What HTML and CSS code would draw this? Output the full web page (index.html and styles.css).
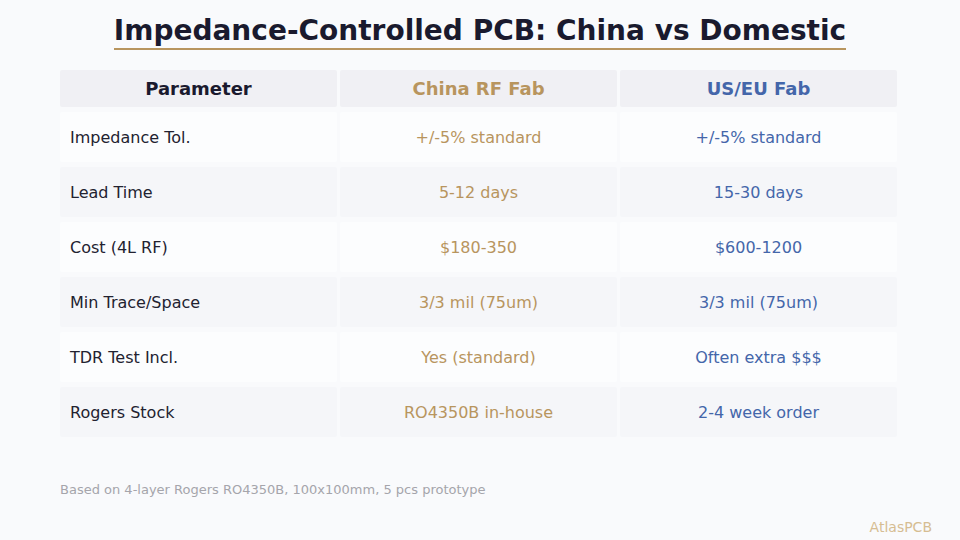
FILE: index.html
```html
<!DOCTYPE html>
<html>
<head>
<meta charset="utf-8">
<link rel="stylesheet" href="styles.css">
</head>
<body>
<div class="page">
  <header class="head">
    <h1 class="title">Impedance-Controlled PCB: China vs Domestic</h1>
  </header>
  <div class="table">
    <div class="cell th">Parameter</div>
    <div class="cell th gold">China RF Fab</div>
    <div class="cell th blue">US/EU Fab</div>

    <div class="cell odd label">Impedance Tol.</div>
    <div class="cell odd gold">+/-5% standard</div>
    <div class="cell odd blue">+/-5% standard</div>

    <div class="cell even label">Lead Time</div>
    <div class="cell even gold">5-12 days</div>
    <div class="cell even blue">15-30 days</div>

    <div class="cell odd label">Cost (4L RF)</div>
    <div class="cell odd gold">$180-350</div>
    <div class="cell odd blue">$600-1200</div>

    <div class="cell even label">Min Trace/Space</div>
    <div class="cell even gold">3/3 mil (75um)</div>
    <div class="cell even blue">3/3 mil (75um)</div>

    <div class="cell odd label">TDR Test Incl.</div>
    <div class="cell odd gold">Yes (standard)</div>
    <div class="cell odd blue">Often extra $$$</div>

    <div class="cell even label">Rogers Stock</div>
    <div class="cell even gold">RO4350B in-house</div>
    <div class="cell even blue">2-4 week order</div>
  </div>
  <p class="note">Based on 4-layer Rogers RO4350B, 100x100mm, 5 pcs prototype</p>
  <div class="brand">AtlasPCB</div>
</div>
</body>
</html>
```
FILE: styles.css
```css
* { box-sizing: border-box; }
html, body { margin: 0; padding: 0; }
body {
  background: #f9fafc;
  font-family: "DejaVu Sans", sans-serif;
  width: 960px;
  height: 540px;
  overflow: hidden;
}
.page {
  width: 960px;
  height: 540px;
  padding: 0 60px 0 60px;
  display: flex;
  flex-direction: column;
}
.head {
  display: flex;
  justify-content: center;
  padding-top: 14px;
}
.title {
  margin: 0;
  font-size: 28px;
  font-weight: bold;
  color: #1a1a2e;
  line-height: 34px;
  padding-bottom: 0;
  border-bottom: 2px solid #b8955e;
}
.table {
  margin-top: 20px;
  display: grid;
  grid-template-columns: 277px 277px 277px;
  grid-template-rows: 37px repeat(6, 50px);
  column-gap: 3px;
  row-gap: 5px;
}
.cell {
  display: flex;
  align-items: center;
  justify-content: center;
  font-size: 16px;
  border-radius: 2px;
}
.th {
  background: #f0f0f4;
  font-size: 18px;
  font-weight: bold;
  color: #1a1a2e;
}
.odd { background: #fcfdfe; }
.even { background: #f5f6f9; }
.label {
  justify-content: flex-start;
  padding-left: 10px;
  color: #222230;
}
.gold { color: #b8955e; }
.blue { color: #4466aa; }
.th.gold { color: #b8955e; }
.th.blue { color: #4466aa; }
.note {
  margin: 45px 0 0 0;
  font-size: 13px;
  color: #a5a5ab;
}
.brand {
  margin-top: 22px;
  align-self: flex-end;
  margin-right: -32px;
  font-size: 14px;
  color: #d6bd92;
}
```
